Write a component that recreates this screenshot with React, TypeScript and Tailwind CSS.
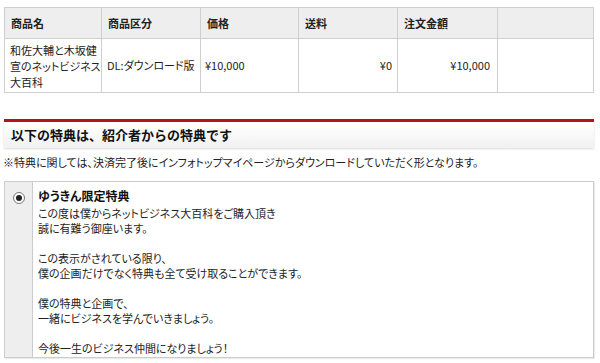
const FONT = "font-['Noto_Sans_CJK_JP','Noto_Sans',sans-serif] [font-feature-settings:'palt']"

const COLS = [
  { label: '商品名', w: 'w-[97px]' },
  { label: '商品区分', w: 'w-[99px]' },
  { label: '価格', w: 'w-[98px]' },
  { label: '送料', w: 'w-[99px]' },
  { label: '注文金額', w: 'w-[100px]' },
  { label: '', w: '' },
]

const LINES = [
  'この度は僕からネットビジネス大百科をご購入頂き',
  '誠に有難う御座います。',
  '',
  'この表示がされている限り、',
  '僕の企画だけでなく特典も全て受け取ることができます。',
  '',
  '僕の特典と企画で、',
  '一緒にビジネスを学んでいきましょう。',
  '',
  '今後一生のビジネス仲間になりましょう！',
]

export default function App() {
  return (
    <div className={`w-[600px] h-[363px] bg-white text-[#222] overflow-hidden ${FONT}`}>
      {/* Order table */}
      <div className="pt-[7px] pl-[4px] pr-[6px]">
        <table className="w-full border-collapse table-fixed text-[11px]">
          <thead>
            <tr className="h-[31px] bg-[#eeeeee]">
              {COLS.map((c, i) => (
                <th key={i} className={`${c.w} border border-[#cfcfcf] text-left font-bold px-[6px]`}>
                  {c.label}
                </th>
              ))}
            </tr>
          </thead>
          <tbody>
            <tr className="h-[54px]">
              <td className="border border-[#cfcfcf] pl-[5px] pr-[2px] leading-[16px] align-middle whitespace-nowrap">
                和佐大輔と木坂健<br />宣のネットビジネス<br />大百科
              </td>
              <td className="border border-[#cfcfcf] px-[5px] whitespace-nowrap">DL:ダウンロード版</td>
              <td className="border border-[#cfcfcf] px-[4px]">¥10,000</td>
              <td className="border border-[#cfcfcf] px-[5px] text-right">¥0</td>
              <td className="border border-[#cfcfcf] px-[7px] text-right">¥10,000</td>
              <td className="border border-[#cfcfcf]"></td>
            </tr>
          </tbody>
        </table>
      </div>

      {/* Section heading */}
      <div className="mt-[26px] ml-[4px] mr-[6px] border-t-[3px] border-[#b3121b] bg-gradient-to-b from-white to-[#f1f1f1] shadow-[0_1px_2px_rgba(0,0,0,0.15)] h-[29px] flex items-center px-[7px]">
        <span className="text-[13px] font-bold text-[#111] [font-feature-settings:normal]">以下の特典は、紹介者からの特典です</span>
      </div>

      <p className="mt-[6px] ml-[3px] text-[11px] leading-[16px] text-[#222]">
        ※特典に関しては、決済完了後にインフォトップマイページからダウンロードしていただく形となります。
      </p>

      {/* Bonus box */}
      <div className="mt-[11px] ml-[4px] mr-[6px] h-[177px] flex border border-[#cccccc] shadow-[1px_1px_1px_rgba(0,0,0,0.08)]">
        <div className="w-[28px] shrink-0 bg-[#eeeeee] border-r border-[#cccccc] flex justify-center pt-[9px]">
          <span className="w-[12px] h-[12px] rounded-full border border-[#777] bg-white flex items-center justify-center mt-[1px]">
            <span className="w-[6px] h-[6px] rounded-full bg-[#222]" />
          </span>
        </div>
        <div className="pl-[5px] pt-[4px] text-[11px]">
          <div className="text-[12px] font-bold leading-[20px] text-[#111]">ゆうきん限定特典</div>
          {LINES.map((l, i) => (
            <div key={i} className="leading-[15px] h-[15px]">{l}</div>
          ))}
        </div>
      </div>
    </div>
  )
}
